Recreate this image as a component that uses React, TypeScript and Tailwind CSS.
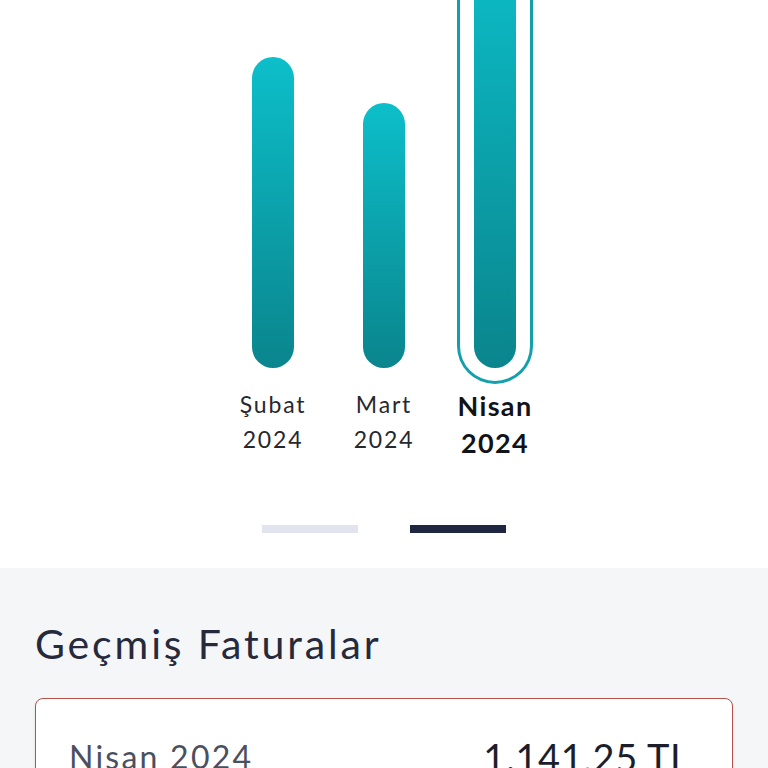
const months = [
  { name: "Şubat", year: "2024", height: 311, active: false },
  { name: "Mart", year: "2024", height: 265, active: false },
  { name: "Nisan", year: "2024", height: 430, active: true },
];

function Bar({ height, active }: { height: number; active: boolean }) {
  const fill = (
    <div
      className="w-[42px] rounded-full bg-gradient-to-b from-[#0cbfca] to-[#0a858d]"
      style={{ height }}
    />
  );
  if (!active) return <div className="mb-[16px]">{fill}</div>;
  return (
    <div className="flex w-[76px] justify-center rounded-b-full border-[3px] border-t-0 border-[#139fab] pb-[13px]">
      {fill}
    </div>
  );
}

export default function App() {
  return (
    <div className="h-[768px] w-[768px] overflow-hidden bg-white font-['Lato',sans-serif]">
      <section className="flex h-[568px] flex-col items-center bg-white">
        <div className="flex h-[384px] items-end gap-[35px] overflow-hidden">
          {months.map((m) => (
            <div key={m.name} className="flex w-[76px] justify-center">
              <Bar height={m.height} active={m.active} />
            </div>
          ))}
        </div>
        <div className="mt-[3px] flex gap-[35px]">
          {months.map((m) =>
            m.active ? (
              <div
                key={m.name}
                className="flex w-[76px] flex-col items-center text-[27px] font-bold leading-[37px] tracking-[0.05em] text-[#111318]"
              >
                <span>{m.name}</span>
                <span>{m.year}</span>
              </div>
            ) : (
              <div
                key={m.name}
                className="flex w-[76px] flex-col items-center text-[23px] leading-[35px] tracking-[0.08em] text-[#26282e]"
              >
                <span>{m.name}</span>
                <span>{m.year}</span>
              </div>
            )
          )}
        </div>
        <div className="mt-auto mb-[35px] flex gap-[52px]">
          <span className="h-[8px] w-[96px] bg-[#e1e4ee]" />
          <span className="h-[8px] w-[96px] bg-[#1e2640]" />
        </div>
      </section>
      <section className="h-[200px] bg-[#f5f6f8] px-[35px] pt-[50px]">
        <h2 className="text-[41px] leading-[52px] font-normal tracking-[0.07em] text-[#262a3c]">
          Geçmiş Faturalar
        </h2>
        <div className="mt-[28px] flex h-[120px] items-start justify-between rounded-lg border-[1.5px] border-[#b5524c] bg-white pl-[33px] pr-[42px] pt-[36px] shadow-sm">
          <span className="text-[32px] leading-[44px] tracking-[0.07em] text-[#4b5060]">Nisan 2024</span>
          <span className="text-[38px] leading-[44px] tracking-[0.015em] text-[#1c1f2b]">1.141,25 TL</span>
        </div>
      </section>
    </div>
  );
}
